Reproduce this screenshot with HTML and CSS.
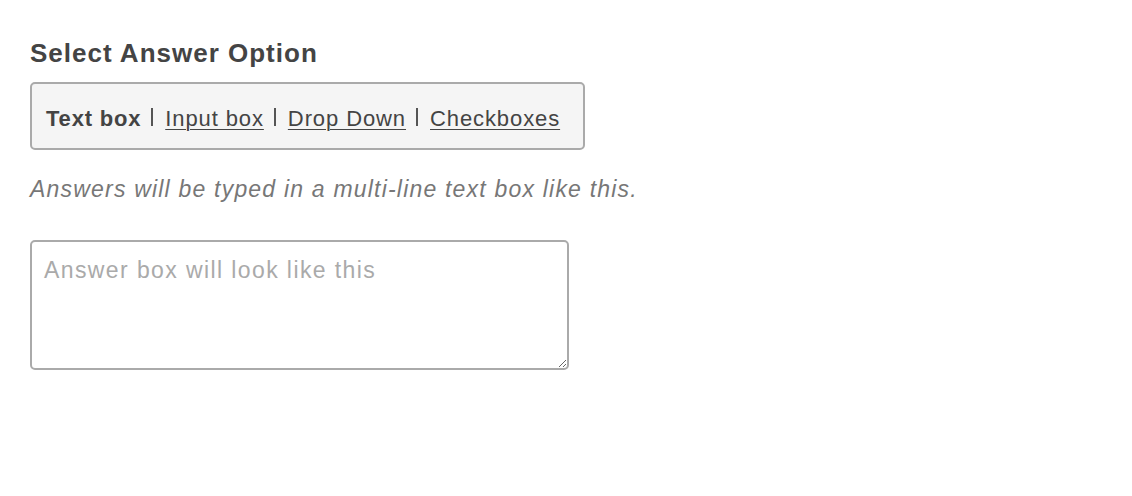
FILE: index.html
```html
<!DOCTYPE html>
<html>
<head>
<meta charset="utf-8">
<link rel="stylesheet" href="styles.css">
</head>
<body>
<div class="page">
  <h2 class="title">Select Answer Option</h2>
  <div class="options">
    <span class="current">Text box</span><span class="sep"></span><a href="#" class="opt">Input box</a><span class="sep"></span><a href="#" class="opt">Drop Down</a><span class="sep"></span><a href="#" class="opt">Checkboxes</a>
  </div>
  <p class="hint">Answers will be typed in a multi-line text box like this.</p>
  <textarea class="answer" placeholder="Answer box will look like this"></textarea>
</div>
</body>
</html>
```
FILE: styles.css
```css
html, body {
  margin: 0;
  padding: 0;
  background: #fff;
}
.page {
  padding: 36px 30px;
  font-family: "Liberation Sans", Arial, sans-serif;
  color: #444;
  display: flex;
  flex-direction: column;
  align-items: flex-start;
}
.title {
  margin: 0;
  font-size: 26px;
  letter-spacing: 1px;
  font-weight: bold;
  color: #444;
  line-height: 34px;
}
.options {
  margin-top: 12px;
  box-sizing: border-box;
  height: 68px;
  width: 555px;
  border: 2px solid #aaa;
  border-radius: 5px;
  background: #f5f5f5;
  padding: 5px 14px 0 14px;
  display: flex;
  align-items: center;
  font-size: 22px;
  letter-spacing: 0.9px;
  color: #444;
}
.current {
  font-weight: bold;
  letter-spacing: 0.8px;
}
.sep {
  display: inline-block;
  width: 2px;
  height: 18px;
  background: #555;
  margin: 0 12px 4px 10px;
}
.opt {
  color: #444;
  text-decoration: underline;
  text-underline-offset: 3px;
  text-decoration-thickness: 1px;
}
.hint {
  margin: 24px 0 0 0;
  font-size: 23px;
  letter-spacing: 1.2px;
  font-style: italic;
  color: #777;
  line-height: 30px;
}
.answer {
  margin-top: 36px;
  box-sizing: border-box;
  width: 539px;
  height: 130px;
  border: 2px solid #aaa;
  border-radius: 5px;
  padding: 15px 12px;
  font-family: "Liberation Sans", Arial, sans-serif;
  font-size: 23px;
  letter-spacing: 1.4px;
  color: #444;
  background: #fff;
}
.answer::placeholder {
  color: #aaa;
}
```
